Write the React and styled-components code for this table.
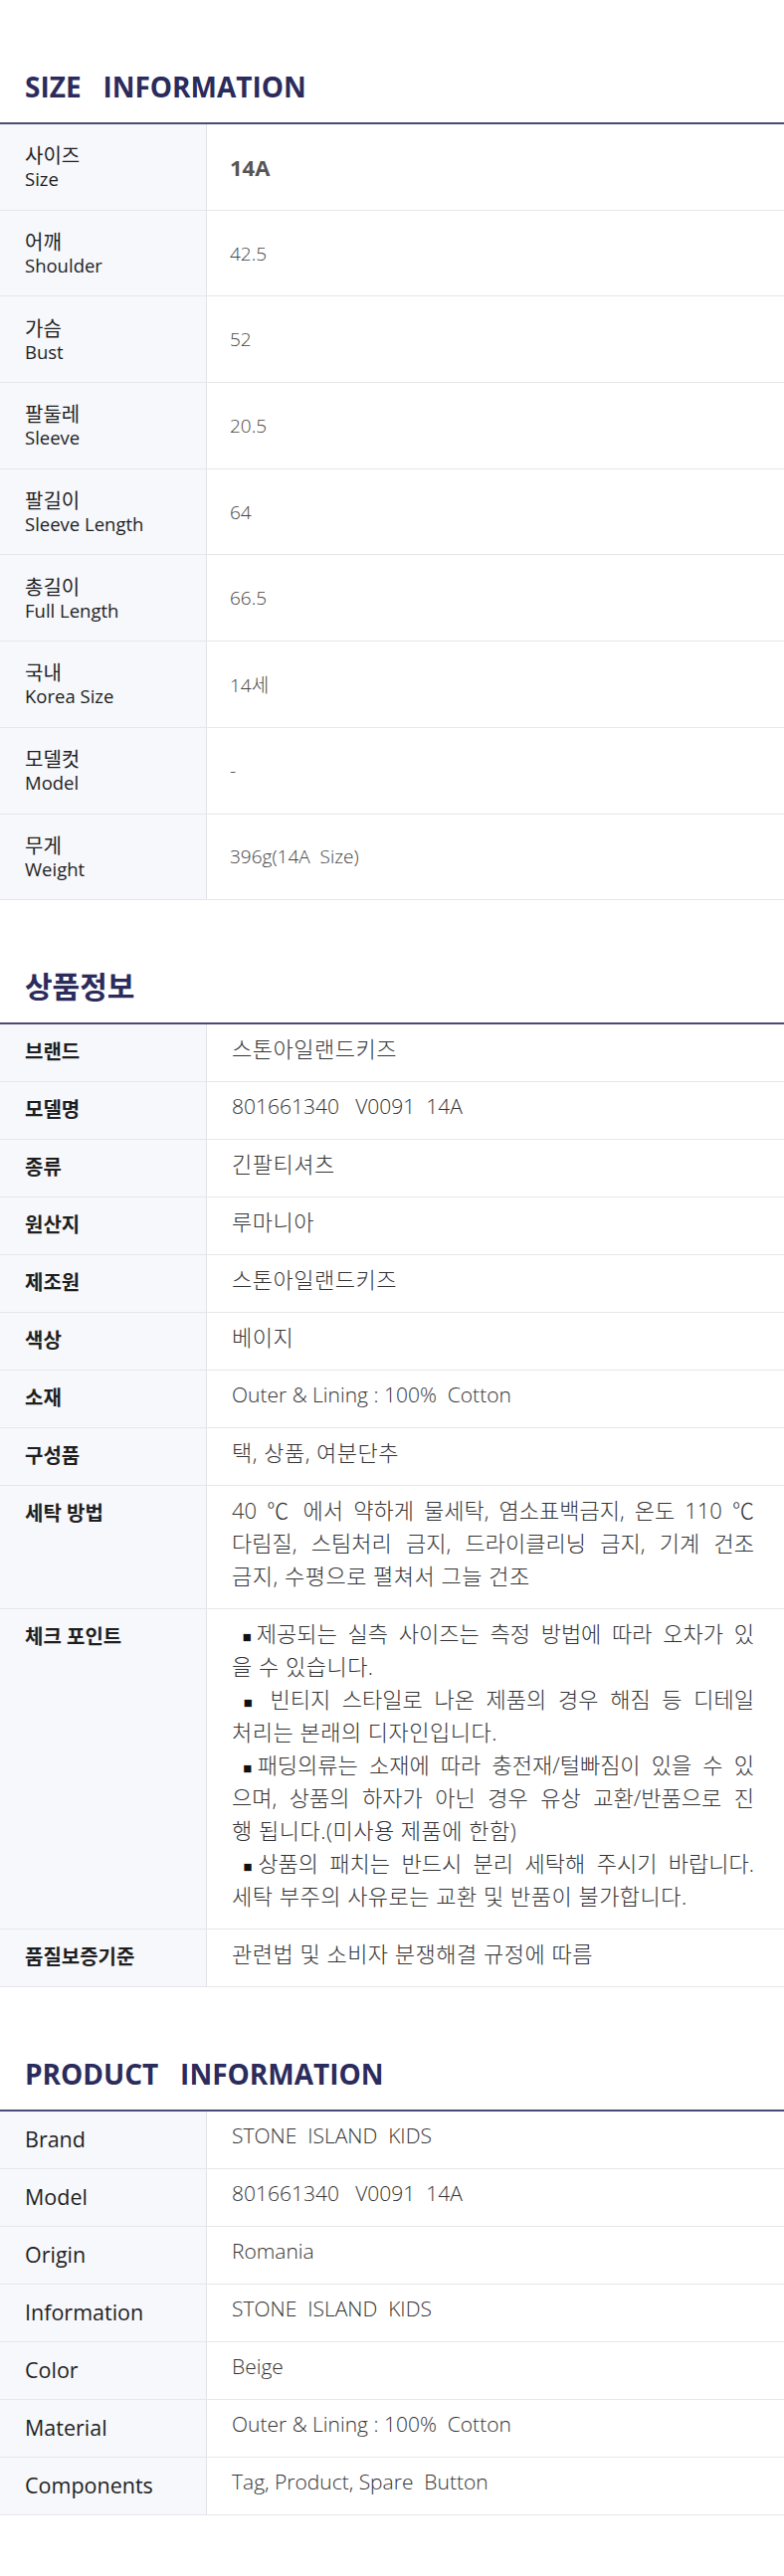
import React from 'react'
import styled, { createGlobalStyle } from 'styled-components'

const GlobalStyle = createGlobalStyle`
  body {
    margin: 0;
    background: #fff;
    font-family: 'Open Sans', 'Noto Sans CJK KR', sans-serif;
    color: #222;
  }
`

const sizeRows = [
  ['사이즈', 'Size', '14A', true],
  ['어깨', 'Shoulder', '42.5'],
  ['가슴', 'Bust', '52'],
  ['팔둘레', 'Sleeve', '20.5'],
  ['팔길이', 'Sleeve Length', '64'],
  ['총길이', 'Full Length', '66.5'],
  ['국내', 'Korea Size', '14세'],
  ['모델컷', 'Model', '-'],
  ['무게', 'Weight', '396g(14A  Size)'],
]

// lines marked with a leading '|' are stretched to the full column width
const goodsRows = [
  ['브랜드', ['스톤아일랜드키즈']],
  ['모델명', ['801661340   V0091  14A']],
  ['종류', ['긴팔티셔츠']],
  ['원산지', ['루마니아']],
  ['제조원', ['스톤아일랜드키즈']],
  ['색상', ['베이지']],
  ['소재', ['Outer & Lining : 100%  Cotton']],
  ['구성품', ['택, 상품, 여분단추']],
  ['세탁 방법', [
    '|40 ℃ 에서 약하게 물세탁, 염소표백금지, 온도 110 ℃',
    '|다림질, 스팀처리 금지, 드라이클리닝 금지, 기계 건조',
    '금지, 수평으로 펼쳐서 그늘 건조',
  ]],
  ['체크 포인트', [
    '| ■제공되는 실측 사이즈는 측정 방법에 따라 오차가 있',
    '을 수 있습니다.',
    '| ■ 빈티지 스타일로 나온 제품의 경우 해짐 등 디테일',
    '처리는 본래의 디자인입니다.',
    '| ■패딩의류는 소재에 따라 충전재/털빠짐이 있을 수 있',
    '|으며, 상품의 하자가 아닌 경우 유상 교환/반품으로 진',
    '행 됩니다.(미사용 제품에 한함)',
    '| ■상품의 패치는 반드시 분리 세탁해 주시기 바랍니다.',
    '세탁 부주의 사유로는 교환 및 반품이 불가합니다.',
  ]],
  ['품질보증기준', ['관련법 및 소비자 분쟁해결 규정에 따름']],
]

const productRows = [
  ['Brand', 'STONE  ISLAND  KIDS'],
  ['Model', '801661340   V0091  14A'],
  ['Origin', 'Romania'],
  ['Information', 'STONE  ISLAND  KIDS'],
  ['Color', 'Beige'],
  ['Material', 'Outer & Lining : 100%  Cotton'],
  ['Components', 'Tag, Product, Spare  Button'],
]

const hangul = /[가-힣]/

const renderLine = (line, i) => {
  const full = line.startsWith('|')
  const text = full ? line.slice(1) : line
  return (
    <Line key={i} $full={full} $ko={hangul.test(text)}>
      {text.split('■').map((part, j) =>
        j === 0 ? part : <React.Fragment key={j}><Square>■</Square>{part}</React.Fragment>
      )}
    </Line>
  )
}

const App = () => {
  return (
    <Page>
      <GlobalStyle />

      <Section>
        <Title>{'SIZE   INFORMATION'}</Title>
        <Table>
          {sizeRows.map(([ko, en, value, strong]) => (
            <Row key={ko} $tall>
              <SizeLabel>
                <span className='ko'>{ko}</span>
                <span className='en'>{en}</span>
              </SizeLabel>
              <SizeValue $strong={strong}>{value}</SizeValue>
            </Row>
          ))}
        </Table>
      </Section>

      <Section>
        <Title $size={30}>상품정보</Title>
        <Table>
          {goodsRows.map(([label, lines]) => (
            <Row key={label}>
              <InfoLabel $bold>{label}</InfoLabel>
              <InfoValue>{lines.map(renderLine)}</InfoValue>
            </Row>
          ))}
        </Table>
      </Section>

      <Section>
        <Title>{'PRODUCT   INFORMATION'}</Title>
        <Table>
          {productRows.map(([label, value]) => (
            <Row key={label}>
              <InfoLabel>{label}</InfoLabel>
              <InfoValue>{renderLine(value, 0)}</InfoValue>
            </Row>
          ))}
        </Table>
      </Section>
    </Page>
  )
}

const Page = styled.div`
  width: 788px;
  padding-bottom: 68px;
`

const Section = styled.section`
  padding-top: 67px;
`

const Title = styled.h2`
  margin: 0 0 16px;
  padding-left: 25px;
  font-size: ${p => p.$size || 28}px;
  line-height: 40px;
  font-weight: 700;
  color: #2b2b5c;
  white-space: pre;
`

const Table = styled.div`
  border-top: 2px solid #4a4a78;
`

const Row = styled.div`
  display: grid;
  grid-template-columns: 208px 1fr;
  min-height: ${p => (p.$tall ? '86.7px' : '58px')};
  box-sizing: border-box;
  border-bottom: 1px solid #e7e7ea;
`

const Cell = styled.div`
  background: #f7f8fc;
  border-right: 1px solid #e1e2ea;
  padding-left: 25px;
`

const SizeLabel = styled(Cell)`
  display: flex;
  flex-direction: column;
  justify-content: center;
  color: #1e1e1e;

  .ko {
    font-size: 20px;
    line-height: 24px;
  }
  .en {
    font-size: 18.5px;
    font-weight: 500;
    line-height: 21px;
  }
`

const SizeValue = styled.div`
  display: flex;
  align-items: center;
  padding-left: 23px;
  font-size: ${p => (p.$strong ? '22px' : '19px')};
  font-weight: ${p => (p.$strong ? 700 : 300)};
  color: ${p => (p.$strong ? '#555' : '#444')};
  white-space: pre;
`

const InfoLabel = styled(Cell)`
  padding-top: 8px;
  font-size: ${p => (p.$bold ? '20px' : '21.5px')};
  line-height: 40px;
  font-weight: ${p => (p.$bold ? 700 : 400)};
  color: #1e1e1e;
`

const InfoValue = styled.div`
  padding: 8px 30px 16px 25px;
  line-height: 33px;
  font-weight: 300;
  color: #333;
`

const Line = styled.div`
  height: 33px;
  font-size: ${p => (p.$ko ? '22px' : '21px')};
  letter-spacing: ${p => (p.$ko && !p.$full ? '0.5px' : '0')};
  white-space: pre;
  text-align: ${p => (p.$full ? 'justify' : 'left')};
  text-align-last: ${p => (p.$full ? 'justify' : 'auto')};
`

const Square = styled.span`
  font-family: 'DejaVu Sans', sans-serif;
  font-size: 15px;
  line-height: 1;
  color: #111;
`

export default App
